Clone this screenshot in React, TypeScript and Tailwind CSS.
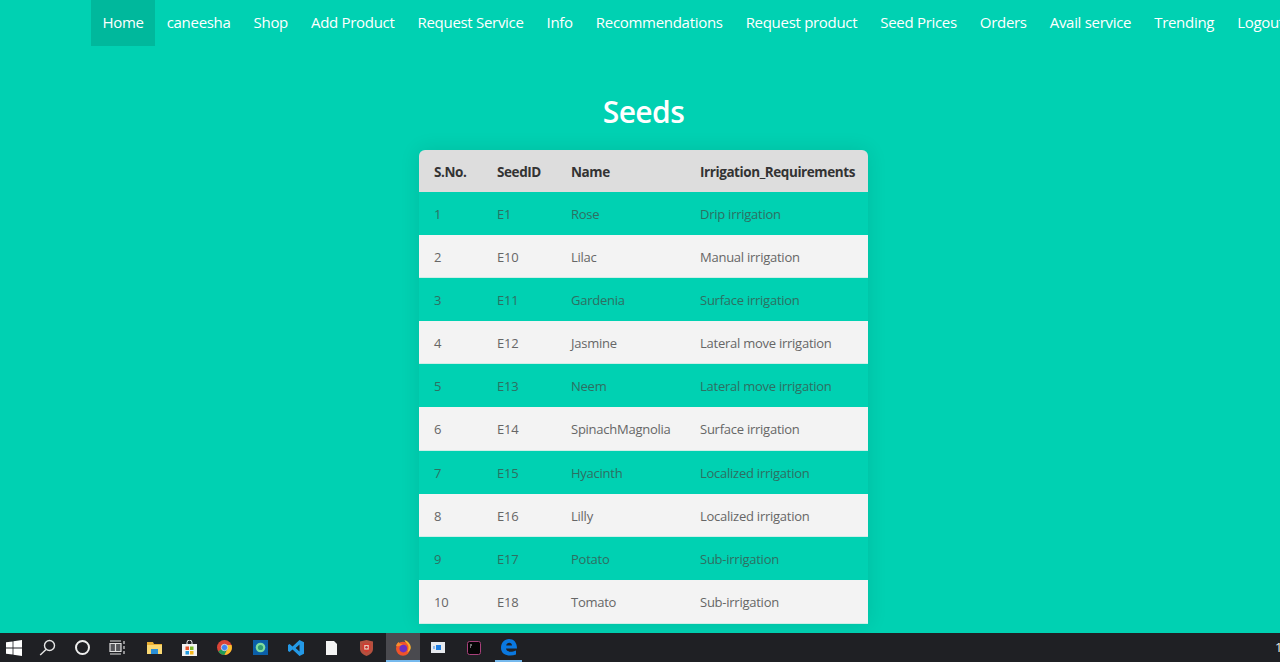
const links = ["caneesha", "Shop", "Add Product", "Request Service", "Info", "Recommendations", "Request product", "Seed Prices", "Orders", "Avail service", "Trending", "Logout"];

const seeds = [
  ["1", "E1", "Rose", "Drip irrigation"],
  ["2", "E10", "Lilac", "Manual irrigation"],
  ["3", "E11", "Gardenia", "Surface irrigation"],
  ["4", "E12", "Jasmine", "Lateral move irrigation"],
  ["5", "E13", "Neem", "Lateral move irrigation"],
  ["6", "E14", "SpinachMagnolia", "Surface irrigation"],
  ["7", "E15", "Hyacinth", "Localized irrigation"],
  ["8", "E16", "Lilly", "Localized irrigation"],
  ["9", "E17", "Potato", "Sub-irrigation"],
  ["10", "E18", "Tomato", "Sub-irrigation"],
];

const Taskbar = () => (
  <div className="h-[29px] shrink-0 bg-[#1f2024] flex items-center relative overflow-hidden">
    <div className="w-[386px] shrink-0 flex items-center">
      <div className="w-[27px] flex justify-center">
        <svg width="16" height="16" viewBox="0 0 16 16" fill="#fff"><path d="M0 2.3 6.6 1.4V7.5H0ZM7.4 1.3 16 0V7.5H7.4ZM0 8.4H6.6V14.6L0 13.7ZM7.4 8.4H16V16L7.4 14.7Z" /></svg>
      </div>
      <div className="w-[41px] flex justify-center">
        <svg width="17" height="17" viewBox="0 0 17 17" fill="none" stroke="#e5e5e5" strokeWidth="1.4"><circle cx="10.5" cy="6.5" r="5" /><path d="M7 10.5 1.2 16" /></svg>
      </div>
      <div className="w-[29px] flex justify-center">
        <div className="w-[15px] h-[15px] rounded-full border-2 border-[#eee]" />
      </div>
      <div className="w-[39px] flex justify-center">
        <svg width="16" height="15" viewBox="0 0 16 15" fill="none" stroke="#ddd" strokeWidth="1.2"><path d="M1 1H12M1 14H12" /><path d="M1 3.5H12V11.5H1Z" fill="#55565a" /><path d="M6.5 3.5V11.5" /><path d="M15 1V4M15 6V9M15 11V14" /></svg>
      </div>
      <div className="w-[36px] flex justify-center">
        <svg width="15" height="13" viewBox="0 0 15 13"><path d="M0 1H6L7 3H15V13H0Z" fill="#e9ae33" /><rect x="0" y="4" width="15" height="9" fill="#f9d873" /><rect x="4" y="8" width="7" height="5" fill="#2a8fd6" /></svg>
      </div>
      <div className="w-[34px] flex justify-center">
        <svg width="15" height="16" viewBox="0 0 15 16"><path d="M0 4H15V16H0Z" fill="#f2f2f2" /><path d="M5 5V2.5a2.5 2.5 0 0 1 5 0V5" fill="none" stroke="#f2f2f2" /><rect x="3.5" y="6.5" width="3.5" height="3.5" fill="#e8532b" /><rect x="8" y="6.5" width="3.5" height="3.5" fill="#7cb927" /><rect x="3.5" y="11" width="3.5" height="3.5" fill="#1f9ae0" /><rect x="8" y="11" width="3.5" height="3.5" fill="#f6b71c" /></svg>
      </div>
      <div className="w-[37px] flex justify-center">
        <svg width="15" height="15" viewBox="0 0 14 14"><circle cx="7" cy="7" r="7" fill="#db4437" /><path d="M1.2 10.8A7 7 0 0 0 7 14L10 8H5Z" fill="#1f9d55" /><path d="M13.5 4.6H7L10 8 7 14A7 7 0 0 0 13.5 4.6Z" fill="#fbc02d" /><circle cx="7" cy="7" r="3" fill="#4285f4" stroke="#ddd" strokeWidth="0.8" /></svg>
      </div>
      <div className="w-[35px] flex justify-center">
        <svg width="15" height="15" viewBox="0 0 15 15"><rect width="15" height="15" fill="#0b5fa8" /><circle cx="7.5" cy="7.5" r="4.8" fill="#7fdca0" /><circle cx="7.5" cy="7.5" r="2.6" fill="#2f9f74" /></svg>
      </div>
      <div className="w-[36px] flex justify-center">
        <svg width="16" height="16" viewBox="0 0 16 16"><path d="M11.5 0 16 2.2V13.8L11.5 16 4.5 9.6 1.6 12 0 11V5L1.6 4 4.5 6.4ZM11.5 4.6 7.6 8 11.5 11.4Z" fill="#2499e6" /></svg>
      </div>
      <div className="w-[35px] flex justify-center">
        <svg width="11" height="14" viewBox="0 0 11 14"><path d="M0 0H8L11 3V14H0Z" fill="#f4f4f4" /></svg>
      </div>
      <div className="w-[35px] flex justify-center">
        <svg width="13" height="16" viewBox="0 0 13 16"><path d="M0 1.5 6.5 0 13 1.5V9C13 12.5 9.5 15 6.5 16 3.5 15 0 12.5 0 9Z" fill="#b5503f" /><path d="M2.5 3.5H10.5V9.5L6.5 12.5 2.5 9.5Z" fill="#d23a30" /><rect x="4.2" y="5" width="4.6" height="4.6" fill="#e8c9b8" /><circle cx="6.5" cy="7.3" r="1.2" fill="#c42a2a" /></svg>
      </div>
    </div>
    <div className="w-[34px] h-full shrink-0 bg-[#4a4a4f] flex justify-center items-center relative">
      <svg width="16" height="16" viewBox="0 0 16 16"><circle cx="8" cy="8.8" r="7" fill="#f0532a" /><circle cx="8.3" cy="8.6" r="3.8" fill="#6d2fc0" /><path d="M9.5 0C9.5 2 12 3 13 5 14 7 13.5 11 12 12.5 14.5 11.5 16 9.5 15.8 7 15.4 4 13 1 9.5 0Z" fill="#fbb02d" /><path d="M1 6C1.5 3.5 3 2.5 4 2 4 3 5 4 8 4.5 5.5 5 4.5 7 1 6Z" fill="#fb8a2d" /></svg>
      <div className="absolute bottom-0 inset-x-0 h-[2px] bg-[#76b9ed]" />
    </div>
    <div className="w-[36px] flex justify-center">
      <svg width="14" height="11" viewBox="0 0 14 11"><rect width="14" height="11" fill="#e6e9ee" /><rect x="5" y="3" width="5" height="5" fill="#1e7de0" /><rect x="2" y="4" width="2" height="3" fill="#8cb9ea" /></svg>
    </div>
    <div className="w-[35px] flex justify-center">
      <svg width="14" height="14" viewBox="0 0 14 14"><rect x="0.5" y="0.5" width="13" height="13" rx="2" fill="#050505" stroke="#a8407a" /><path d="M3 4H5M3 6H4" stroke="#ddd" /></svg>
    </div>
    <div className="w-[35px] h-full flex justify-center items-center relative">
      <svg width="16" height="17" viewBox="0 0 16 17"><path d="M0 9C0 3.5 3.5 0 8 0 12.5 0 16 3 16 9.5H5C5.3 12.5 9.5 14 15 11.5V15.5C9 18 0 16.5 0 9ZM5.2 6.4H11C11 3 5.6 3 5.2 6.4Z" fill="#0a78e0" /></svg>
      <div className="absolute bottom-0 left-[4px] w-[27px] h-[2px] bg-[#76b9ed]" />
    </div>
    <span className="absolute left-[1275px] top-[6px] text-[13px] leading-[16px] text-[#eee]">1</span>
  </div>
);

export default function App() {
  return (
    <div className="h-screen overflow-hidden flex flex-col bg-[#00d1b2] font-['Open_Sans',sans-serif]">
      <div className="flex-1 min-h-0 overflow-hidden w-[1287px]">
        <nav className="flex pl-[91px] h-[46px] whitespace-nowrap text-[15px] tracking-[-0.3px] text-white">
          <a className="h-full px-[11.5px] pb-[2px] flex items-center bg-[#00b89c]">Home</a>
          {links.map((l) => (
            <a key={l} className="h-full px-[11.5px] pb-[2px] flex items-center">{l}</a>
          ))}
        </nav>
        <h1 className="mt-[45px] text-center text-[30px] leading-[42px] font-semibold text-white tracking-[-0.55px]">Seeds</h1>
        <div className="flex justify-center mt-[17px]">
          <table className="w-[449px] table-fixed border-separate border-spacing-0 text-[13px] rounded-t-[6px] overflow-hidden shadow-[0_0_20px_rgba(0,0,0,0.1)]">
            <colgroup>
              <col className="w-[63px]" />
              <col className="w-[74px]" />
              <col className="w-[129px]" />
              <col className="w-[183px]" />
            </colgroup>
            <thead>
              <tr className="bg-[#dddddd] text-[#333333] text-[13.5px]">
                {["S.No.", "SeedID", "Name", "Irrigation_Requirements"].map((h) => (
                  <th key={h} className="h-[42px] pl-[15px] pt-[2px] text-left font-bold whitespace-nowrap tracking-[-0.42px]">{h}</th>
                ))}
              </tr>
            </thead>
            <tbody>
              {seeds.map((row, i) => (
                <tr key={row[0]} className={i % 2 === 0 ? "text-[#2e6f62]" : "bg-[#f3f3f3] text-[#666666]"}>
                  {row.map((c) => (
                    <td key={c} className={`pl-[15px] whitespace-nowrap tracking-[-0.25px] ${i === 5 || i === 9 ? "h-[44px]" : "h-[43px]"} ${i % 2 === 1 ? "pt-[3px] border-b border-[#cfeee7]" : "pt-[2px]"}`}>{c}</td>
                  ))}
                </tr>
              ))}
            </tbody>
          </table>
        </div>
      </div>
      <Taskbar />
    </div>
  );
}
